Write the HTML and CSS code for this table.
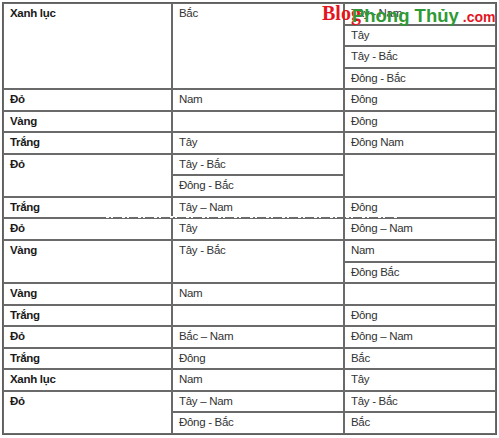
FILE: index.html
```html
<!DOCTYPE html>
<html lang="vi">
<head>
<meta charset="utf-8">
<title>Màu sắc và hướng</title>
<link rel="stylesheet" href="styles.css">
</head>
<body>
<div class="wrap">
<table class="grid">
<colgroup><col class="c1"><col class="c2"><col class="c3"></colgroup>
<tbody>
<tr><td class="k" rowspan="4">Xanh lục</td><td rowspan="4">Bắc</td><td>Tây - Nam</td></tr>
<tr><td>Tây</td></tr>
<tr><td>Tây - Bắc</td></tr>
<tr><td>Đông - Bắc</td></tr>
<tr><td class="k">Đỏ</td><td>Nam</td><td>Đông</td></tr>
<tr><td class="k">Vàng</td><td></td><td>Đông</td></tr>
<tr><td class="k">Trắng</td><td>Tây</td><td>Đông Nam</td></tr>
<tr><td class="k" rowspan="2">Đỏ</td><td>Tây - Bắc</td><td rowspan="2"></td></tr>
<tr><td>Đông - Bắc</td></tr>
<tr><td class="k">Trắng</td><td>Tây – Nam</td><td>Đông</td></tr>
<tr><td class="k">Đỏ</td><td>Tây</td><td>Đông – Nam</td></tr>
<tr><td class="k" rowspan="2">Vàng</td><td rowspan="2">Tây - Bắc</td><td>Nam</td></tr>
<tr><td>Đông Bắc</td></tr>
<tr><td class="k">Vàng</td><td>Nam</td><td></td></tr>
<tr><td class="k">Trắng</td><td></td><td>Đông</td></tr>
<tr><td class="k">Đỏ</td><td>Bắc – Nam</td><td>Đông – Nam</td></tr>
<tr><td class="k">Trắng</td><td>Đông</td><td>Bắc</td></tr>
<tr><td class="k">Xanh lục</td><td>Nam</td><td>Tây</td></tr>
<tr><td class="k" rowspan="2">Đỏ</td><td>Tây – Nam</td><td>Tây - Bắc</td></tr>
<tr><td>Đông - Bắc</td><td>Bắc</td></tr>
</tbody>
</table>
<div class="scratch"></div>
<div class="logo"><span class="blog">Blog</span><span class="pt">Phong Thủy</span><span class="com">.com</span></div>
</div>
</body>
</html>
```
FILE: styles.css
```css
html, body {
  margin: 0;
  padding: 0;
  background: #ffffff;
}

.wrap {
  position: relative;
  width: 499px;
  height: 438px;
  overflow: hidden;
}

.grid {
  margin: 2px 0 0 2px;
  border-collapse: separate;
  border-spacing: 0;
  table-layout: fixed;
  width: 495px;
  border: 1px solid #5e5e5e;
  font-family: "Liberation Sans", Arial, sans-serif;
  font-size: 11.5px;
  letter-spacing: -0.3px;
  line-height: 15px;
  color: #333333;
}

.c1 { width: 169px; }
.c2 { width: 172px; }
.c3 { width: 152px; }

.grid tr {
  height: 21.55px;
}

.grid td {
  border: 1px solid #6a6a6a;
  padding: 2px 6px 0 6px;
  vertical-align: top;
  text-align: left;
  white-space: nowrap;
}

.grid td.k {
  font-weight: bold;
  color: #1a1a1a;
}

.scratch {
  position: absolute;
  left: 97px;
  top: 216px;
  width: 302px;
  height: 2px;
  background: repeating-linear-gradient(90deg, transparent 0 9px, #ffffff 9px 12px, transparent 12px 14px, #ffffff 14px 16px);
}

.logo {
  position: absolute;
  left: 322px;
  top: 0;
  white-space: nowrap;
  line-height: 26px;
}

.blog {
  font-family: "Liberation Serif", "Times New Roman", serif;
  font-weight: bold;
  font-size: 20px;
  color: #e3161f;
}

.pt {
  font-family: "Liberation Sans", Arial, sans-serif;
  font-weight: bold;
  font-size: 18.5px;
  color: #2f9a35;
  margin-left: -9px;
  position: relative;
  top: 2px;
}

.com {
  font-family: "Liberation Sans", Arial, sans-serif;
  font-weight: bold;
  font-size: 14px;
  color: #e3161f;
  margin-left: 4px;
  position: relative;
  top: 2px;
}
```
